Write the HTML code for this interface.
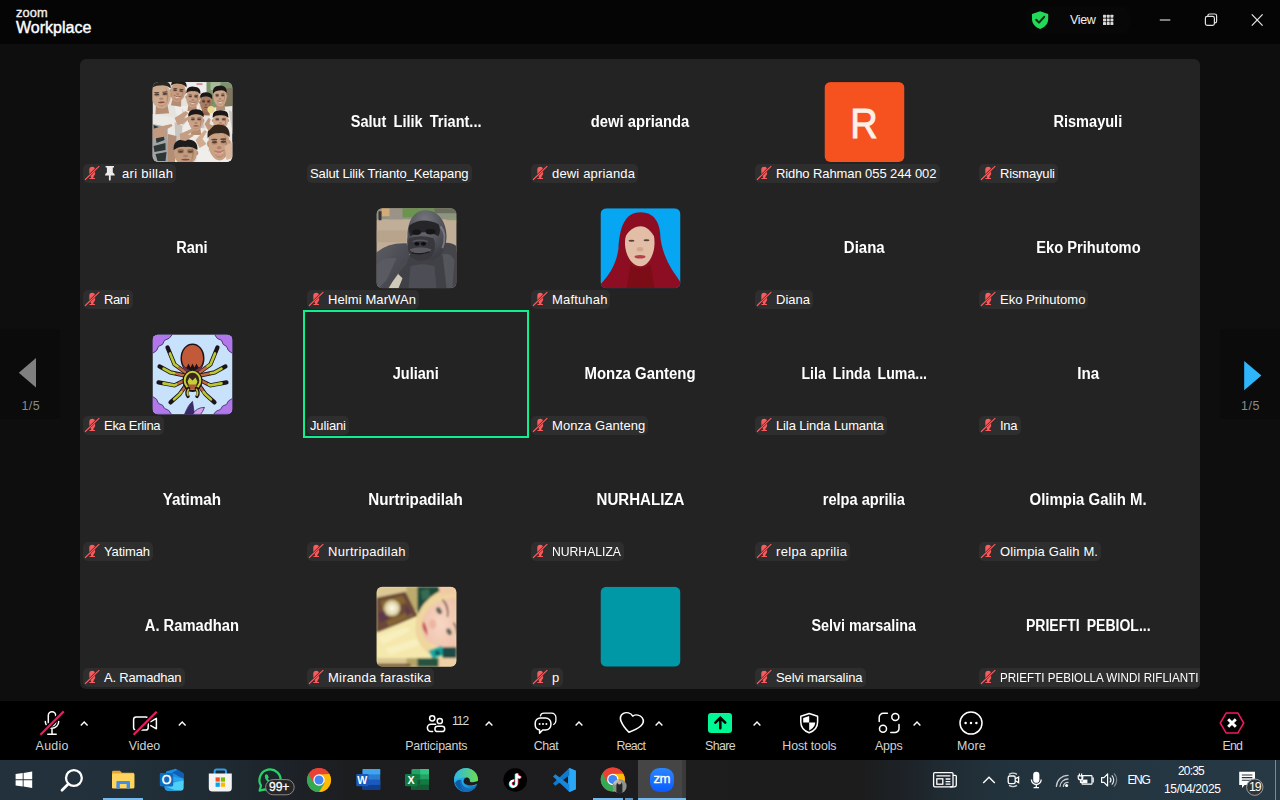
<!DOCTYPE html>
<html lang="en">
<head>
<meta charset="utf-8">
<title>Zoom Workplace</title>
<style>
html,body{margin:0;padding:0;}
body{width:1280px;height:800px;overflow:hidden;position:relative;background:#0e0e0e;font-family:"Liberation Sans",sans-serif;color:#fff;}
.a{position:absolute;}
.t{position:absolute;white-space:nowrap;line-height:1;}
#titlebar{left:0;top:0;width:1280px;height:44px;background:#050505;}
#panel{left:80px;top:59px;width:1120px;height:630px;background:#232323;border-radius:6px;overflow:hidden;}
.nm{position:absolute;white-space:nowrap;font-weight:bold;font-size:15.6px;line-height:18px;height:18px;color:#fff;text-align:center;width:224px;}
.lb{position:absolute;height:19px;background:#2e2e2e;border-radius:5px;white-space:nowrap;font-size:13px;line-height:19px;color:#fff;box-sizing:border-box;}
.lb svg{position:absolute;left:1px;top:1px;}
.lb span{position:absolute;top:0;}
.av{position:absolute;width:80px;height:80px;border-radius:6px;overflow:hidden;}
.av svg{display:block;}
#toolbar{left:0;top:701px;width:1280px;height:59px;background:#000;}
.tl{position:absolute;white-space:nowrap;font-size:12.4px;line-height:14px;color:#d2d2d2;transform:translateX(-50%);top:739px;}
#taskbar{left:0;top:760px;width:1280px;height:40px;background:linear-gradient(90deg,#22313b 0px,#21303a 120px,#1f2a32 220px,#1d2228 290px,#1c1d1f 350px,#1c1c1d 860px,#1d2227 905px,#202c34 950px,#22323c 1000px,#243540 1100px,#263944 1280px);}
</style>
</head>
<body>
<div id="titlebar" class="a"></div>
<div class="t" style="left:16px;top:7px;font-size:12.8px;color:#f2f2f2;letter-spacing:0.1px;-webkit-text-stroke:0.35px #f2f2f2;">zoom</div>
<div class="t" style="left:16px;top:20.3px;font-size:16px;color:#fff;-webkit-text-stroke:0.4px #fff;">Workplace</div>
<svg class="a" style="left:1020px;top:0" width="260" height="44" viewBox="1020 0 260 44">
  <rect x="1026" y="6" width="104" height="28" rx="10" fill="#070707"/>
  <path d="M1040.1 11.2 L1048.2 14 V19 C1048.2 24 1044.6 27.4 1040.1 28.9 C1035.6 27.4 1032 24 1032 19 V14 Z" fill="#23d959"/>
  <path d="M1036.2 19.8 L1039 22.6 L1044.2 16.8" fill="none" stroke="#0b2a14" stroke-width="2" stroke-linecap="round" stroke-linejoin="round"/>
  <g fill="#d8d8d8">
    <rect x="1103" y="14.7" width="3" height="3" rx=".6"/><rect x="1106.7" y="14.7" width="3" height="3" rx=".6"/><rect x="1110.4" y="14.7" width="3" height="3" rx=".6"/>
    <rect x="1103" y="18.4" width="3" height="3" rx=".6"/><rect x="1106.7" y="18.4" width="3" height="3" rx=".6"/><rect x="1110.4" y="18.4" width="3" height="3" rx=".6"/>
    <rect x="1103" y="22.1" width="3" height="3" rx=".6"/><rect x="1106.7" y="22.1" width="3" height="3" rx=".6"/><rect x="1110.4" y="22.1" width="3" height="3" rx=".6"/>
  </g>
  <path d="M1159.8 20 H1170.3" stroke="#d0d0d0" stroke-width="1.2" fill="none"/>
  <rect x="1205.4" y="16.4" width="9" height="9" rx="1.8" fill="none" stroke="#e0e0e0" stroke-width="1.2"/>
  <path d="M1207.9 16.2 V15.6 a1.6 1.6 0 0 1 1.6 -1.6 H1214.8 a1.8 1.8 0 0 1 1.8 1.8 V21.2 a1.6 1.6 0 0 1 -1.6 1.6 H1214.6" fill="none" stroke="#e0e0e0" stroke-width="1.2"/>
  <path d="M1251.8 14.4 L1262.6 25.6 M1262.6 14.4 L1251.8 25.6" stroke="#e8e8e8" stroke-width="1.2" fill="none"/>
</svg>
<div class="t" style="left:1070px;top:14px;font-size:12.6px;color:#f0f0f0;letter-spacing:-0.4px;">View</div>
<!-- page nav -->
<div class="a" style="left:0;top:329px;width:60px;height:90px;background:#0b0b0b;border-radius:0 2px 2px 0;"></div>
<div class="a" style="left:1220px;top:329px;width:60px;height:90px;background:#0b0b0b;border-radius:2px 0 0 2px;"></div>
<svg class="a" style="left:0;top:329px" width="60" height="90" viewBox="0 329 60 90"><path d="M36 358 V387.5 L18.8 372.7 Z" fill="#808080"/></svg>
<svg class="a" style="left:1220px;top:329px" width="60" height="90" viewBox="1220 329 60 90"><path d="M1244.2 361 V390.2 L1261.4 375.6 Z" fill="#2fb5fc"/></svg>
<div class="t" style="left:21.4px;top:399.8px;font-size:12.5px;letter-spacing:0.5px;color:#8a8a8a;">1/5</div>
<div class="t" style="left:1241px;top:399.8px;font-size:12.5px;letter-spacing:0.5px;color:#8a8a8a;">1/5</div>

<div id="panel" class="a">
<div class="av" style="left:72px;top:23px;transform:translate(0.5px,0.10px)"><svg width="80" height="80" viewBox="0 0 80 80">
<defs><filter id="bb" x="-5%" y="-5%" width="110%" height="110%"><feGaussianBlur stdDeviation="0.55"/></filter></defs>
<rect width="80" height="80" fill="#e6e3df"/>
<g filter="url(#bb)">
<rect x="30" y="0" width="28" height="14" fill="#efeeec"/>
<rect x="44" y="1" width="6" height="2" fill="#c8575a" opacity=".6"/>
<rect x="54" y="0" width="26" height="26" fill="#7b946c"/>
<rect x="58" y="0" width="10" height="8" fill="#a9bb9a"/>
<rect x="72" y="6" width="8" height="22" fill="#81765c"/>
<path d="M0 32 L24 36 L27 80 L0 80Z" fill="#ebe9e6"/>
<path d="M22 24 L46 24 L50 50 L30 54Z" fill="#efedea"/>
<path d="M56 26 L80 24 L80 52 L60 46Z" fill="#eceae6"/>
<path d="M30 50 L58 46 L60 72 L34 74Z" fill="#eeece8"/>
<path d="M44 70 L80 60 L80 80 L44 80Z" fill="#f0eeeb"/>
<path d="M22 40 L30 44 L28 70 L24 74Z" fill="#c9c4be"/>
<path d="M30 26 L34 40 L30 44Z M50 30 L52 46 L48 46Z M58 50 L62 58 L56 70Z M76 28 L80 30 L80 50Z" fill="#cdc8c2"/>
<path d="M0 42 L15 45 L16 80 L0 80Z" fill="#a2a5a5"/>
<path d="M1 43 L9 46 L8 50 L2 52Z M3 54 L11 52 L12 58 L4 61Z M1 64 L13 61 L13 68 L2 70Z M3 72 L14 70 L13 79 L5 79Z" fill="#2f3436"/>
<path d="M15.5 52 L24 54 L22.5 80 L15.5 80Z" fill="#b48d76"/>
<g transform="rotate(2 53.5 20.5)"><path d="M50.2 25.56 L56.8 25.56 L57.7 33.379999999999995 L49.3 33.379999999999995Z" fill="#956c53"/><ellipse cx="47.62" cy="20.5" rx="0.8400000000000001" ry="1.656" fill="#956c53"/><ellipse cx="59.38" cy="20.5" rx="0.8400000000000001" ry="1.656" fill="#956c53"/><ellipse cx="53.5" cy="20.5" rx="6" ry="9.2" fill="#a97c61"/><path d="M56.5 14.98 Q59.8 20.5 55.9 28.32 Q58.0 20.5 56.5 14.98Z" fill="#74503b" opacity=".55"/><path d="M50.5 26.02 Q53.5 30.619999999999997 56.5 26.02 Q53.5 28.78 50.5 26.02Z" fill="#74503b" opacity=".4"/><path d="M47.26 16.82 Q46.66 10.012 53.5 10.196000000000002 Q60.34 10.012 59.74 16.82 Q57.1 13.876000000000001 53.5 14.428 Q49.9 13.876000000000001 47.26 16.82Z" fill="#1d1918"/><ellipse cx="50.98" cy="19.58" rx="1.5" ry="0.69" fill="#33241f"/><ellipse cx="50.98" cy="18.2" rx="1.7999999999999998" ry="0.45999999999999996" fill="#43332c" opacity=".85"/><ellipse cx="50.98" cy="19.947999999999997" rx="1.92" ry="1.196" fill="#74503b" opacity=".35"/><ellipse cx="56.02" cy="19.58" rx="1.5" ry="0.69" fill="#33241f"/><ellipse cx="56.02" cy="18.2" rx="1.7999999999999998" ry="0.45999999999999996" fill="#43332c" opacity=".85"/><ellipse cx="56.02" cy="19.947999999999997" rx="1.92" ry="1.196" fill="#74503b" opacity=".35"/><ellipse cx="53.5" cy="22.708" rx="1.32" ry="0.9199999999999999" fill="#74503b" opacity=".65"/><ellipse cx="53.5" cy="25.284" rx="2.16" ry="0.644" fill="#8a4a44"/></g><g transform="rotate(8 25.5 9.5)"><path d="M21.43 15.22 L29.57 15.22 L30.68 24.06 L20.32 24.06Z" fill="#b58d72"/><ellipse cx="18.248" cy="9.5" rx="1.0360000000000003" ry="1.8719999999999999" fill="#b58d72"/><ellipse cx="32.752" cy="9.5" rx="1.0360000000000003" ry="1.8719999999999999" fill="#b58d72"/><ellipse cx="25.5" cy="9.5" rx="7.4" ry="10.4" fill="#c59c80"/><path d="M29.2 3.26 Q33.27 9.5 28.46 18.34 Q31.05 9.5 29.2 3.26Z" fill="#9a745b" opacity=".55"/><path d="M21.8 15.74 Q25.5 20.94 29.2 15.74 Q25.5 18.86 21.8 15.74Z" fill="#9a745b" opacity=".4"/><path d="M17.804 4.300000000000001 Q17.064 -2.3560000000000008 25.5 -2.1480000000000006 Q33.936 -2.3560000000000008 33.196 4.300000000000001 Q29.94 0.972 25.5 1.596 Q21.06 0.972 17.804 4.300000000000001Z" fill="#1e1a19"/><ellipse cx="22.392" cy="8.46" rx="1.85" ry="0.78" fill="#33241f"/><ellipse cx="22.392" cy="6.9" rx="2.22" ry="0.52" fill="#43332c" opacity=".85"/><ellipse cx="22.392" cy="8.876000000000001" rx="2.3680000000000003" ry="1.352" fill="#9a745b" opacity=".35"/><ellipse cx="28.608" cy="8.46" rx="1.85" ry="0.78" fill="#33241f"/><ellipse cx="28.608" cy="6.9" rx="2.22" ry="0.52" fill="#43332c" opacity=".85"/><ellipse cx="28.608" cy="8.876000000000001" rx="2.3680000000000003" ry="1.352" fill="#9a745b" opacity=".35"/><ellipse cx="25.5" cy="11.996" rx="1.6280000000000001" ry="1.04" fill="#9a745b" opacity=".65"/><path d="M22.244 14.076 Q25.5 17.82 28.756 14.076 Q25.5 15.116 22.244 14.076Z" fill="#efe9e2"/><path d="M22.022 13.972000000000001 Q25.5 15.532 28.978 13.972000000000001" stroke="#8a4a44" stroke-width=".7" fill="none"/></g><g transform="rotate(4 40.5 15.5)"><path d="M36.76 20.89 L44.24 20.89 L45.26 29.22 L35.74 29.22Z" fill="#b58d72"/><ellipse cx="33.836" cy="15.5" rx="0.9520000000000001" ry="1.764" fill="#b58d72"/><ellipse cx="47.164" cy="15.5" rx="0.9520000000000001" ry="1.764" fill="#b58d72"/><ellipse cx="40.5" cy="15.5" rx="6.8" ry="9.8" fill="#c9a185"/><path d="M43.9 9.620000000000001 Q47.64 15.5 43.22 23.83 Q45.6 15.5 43.9 9.620000000000001Z" fill="#9a745b" opacity=".55"/><path d="M37.1 21.38 Q40.5 26.28 43.9 21.38 Q40.5 24.32 37.1 21.38Z" fill="#9a745b" opacity=".4"/><path d="M33.428 11.58 Q32.748000000000005 4.327999999999999 40.5 4.523999999999999 Q48.251999999999995 4.327999999999999 47.572 11.58 Q44.58 8.444 40.5 9.032 Q36.42 8.444 33.428 11.58Z" fill="#1c1918"/><ellipse cx="37.644" cy="14.52" rx="1.7" ry="0.735" fill="#33241f"/><ellipse cx="37.644" cy="13.049999999999999" rx="2.04" ry="0.49000000000000005" fill="#43332c" opacity=".85"/><ellipse cx="37.644" cy="14.911999999999999" rx="2.176" ry="1.2740000000000002" fill="#9a745b" opacity=".35"/><ellipse cx="43.356" cy="14.52" rx="1.7" ry="0.735" fill="#33241f"/><ellipse cx="43.356" cy="13.049999999999999" rx="2.04" ry="0.49000000000000005" fill="#43332c" opacity=".85"/><ellipse cx="43.356" cy="14.911999999999999" rx="2.176" ry="1.2740000000000002" fill="#9a745b" opacity=".35"/><ellipse cx="40.5" cy="17.852" rx="1.496" ry="0.9800000000000001" fill="#9a745b" opacity=".65"/><path d="M37.508 19.812 Q40.5 23.34 43.492 19.812 Q40.5 20.792 37.508 19.812Z" fill="#efe9e2"/><path d="M37.304 19.714 Q40.5 21.184 43.696 19.714" stroke="#8a4a44" stroke-width=".7" fill="none"/></g><g transform="rotate(-3 67.5 14.5)"><path d="M63.87 19.89 L71.13 19.89 L72.12 28.22 L62.88 28.22Z" fill="#b58d72"/><ellipse cx="61.032" cy="14.5" rx="0.924" ry="1.764" fill="#b58d72"/><ellipse cx="73.968" cy="14.5" rx="0.924" ry="1.764" fill="#b58d72"/><ellipse cx="67.5" cy="14.5" rx="6.6" ry="9.8" fill="#cda68b"/><path d="M70.8 8.620000000000001 Q74.43 14.5 70.14 22.83 Q72.45 14.5 70.8 8.620000000000001Z" fill="#9a745b" opacity=".55"/><path d="M64.2 20.38 Q67.5 25.28 70.8 20.38 Q67.5 23.32 64.2 20.38Z" fill="#9a745b" opacity=".4"/><path d="M60.636 10.972 Q59.976 3.327999999999999 67.5 3.523999999999999 Q75.024 3.327999999999999 74.364 10.972 Q71.46 7.836 67.5 8.424 Q63.54 7.836 60.636 10.972Z" fill="#1a1716"/><ellipse cx="64.728" cy="13.52" rx="1.65" ry="0.735" fill="#33241f"/><ellipse cx="64.728" cy="12.049999999999999" rx="1.9799999999999998" ry="0.49000000000000005" fill="#43332c" opacity=".85"/><ellipse cx="64.728" cy="13.911999999999999" rx="2.112" ry="1.2740000000000002" fill="#9a745b" opacity=".35"/><ellipse cx="70.272" cy="13.52" rx="1.65" ry="0.735" fill="#33241f"/><ellipse cx="70.272" cy="12.049999999999999" rx="1.9799999999999998" ry="0.49000000000000005" fill="#43332c" opacity=".85"/><ellipse cx="70.272" cy="13.911999999999999" rx="2.112" ry="1.2740000000000002" fill="#9a745b" opacity=".35"/><ellipse cx="67.5" cy="16.852" rx="1.452" ry="0.9800000000000001" fill="#9a745b" opacity=".65"/><path d="M64.596 18.812 Q67.5 22.34 70.404 18.812 Q67.5 19.792 64.596 18.812Z" fill="#efe9e2"/><path d="M64.398 18.714 Q67.5 20.184 70.602 18.714" stroke="#8a4a44" stroke-width=".7" fill="none"/></g><g transform="rotate(-4 8.5 13.5)"><path d="M3.1099999999999994 20.65 L13.89 20.65 L15.36 31.7 L1.6399999999999997 31.7Z" fill="#b58d72"/><ellipse cx="-1.104000000000001" cy="13.5" rx="1.3720000000000003" ry="2.34" fill="#b58d72"/><ellipse cx="18.104" cy="13.5" rx="1.3720000000000003" ry="2.34" fill="#b58d72"/><ellipse cx="8.5" cy="13.5" rx="9.8" ry="13" fill="#cda98e"/><path d="M13.4 5.7 Q18.79 13.5 12.42 24.549999999999997 Q15.850000000000001 13.5 13.4 5.7Z" fill="#9a745b" opacity=".55"/><path d="M3.5999999999999996 21.3 Q8.5 27.8 13.4 21.3 Q8.5 25.200000000000003 3.5999999999999996 21.3Z" fill="#9a745b" opacity=".4"/><path d="M-1.692000000000002 6.74 Q-2.6720000000000006 -1.3200000000000003 8.5 -1.06 Q19.672 -1.3200000000000003 18.692 6.74 Q14.379999999999999 2.58 8.5 3.3600000000000003 Q2.62 2.58 -1.692000000000002 6.74Z" fill="#2b2523"/><ellipse cx="4.3839999999999995" cy="12.2" rx="2.45" ry="0.975" fill="#33241f"/><ellipse cx="4.3839999999999995" cy="10.25" rx="2.94" ry="0.65" fill="#43332c" opacity=".85"/><ellipse cx="4.3839999999999995" cy="12.719999999999999" rx="3.136" ry="1.69" fill="#9a745b" opacity=".35"/><ellipse cx="12.616" cy="12.2" rx="2.45" ry="0.975" fill="#33241f"/><ellipse cx="12.616" cy="10.25" rx="2.94" ry="0.65" fill="#43332c" opacity=".85"/><ellipse cx="12.616" cy="12.719999999999999" rx="3.136" ry="1.69" fill="#9a745b" opacity=".35"/><ellipse cx="8.5" cy="16.62" rx="2.156" ry="1.3" fill="#9a745b" opacity=".65"/><ellipse cx="8.5" cy="20.259999999999998" rx="3.528" ry="0.9100000000000001" fill="#8a4a44"/></g><g transform="rotate(0 43.5 38.5)"><path d="M39.43 44.11 L47.57 44.11 L48.68 52.78 L38.32 52.78Z" fill="#b58d72"/><ellipse cx="36.248" cy="38.5" rx="1.0360000000000003" ry="1.8359999999999999" fill="#b58d72"/><ellipse cx="50.752" cy="38.5" rx="1.0360000000000003" ry="1.8359999999999999" fill="#b58d72"/><ellipse cx="43.5" cy="38.5" rx="7.4" ry="10.2" fill="#caa287"/><path d="M47.2 32.38 Q51.27 38.5 46.46 47.17 Q49.05 38.5 47.2 32.38Z" fill="#9a745b" opacity=".55"/><path d="M39.8 44.62 Q43.5 49.72 47.2 44.62 Q43.5 47.68 39.8 44.62Z" fill="#9a745b" opacity=".4"/><path d="M35.804 34.827999999999996 Q35.064 26.872 43.5 27.076 Q51.936 26.872 51.196 34.827999999999996 Q47.94 31.563999999999997 43.5 32.175999999999995 Q39.06 31.563999999999997 35.804 34.827999999999996Z" fill="#1c1918"/><ellipse cx="40.392" cy="37.48" rx="1.85" ry="0.7649999999999999" fill="#33241f"/><ellipse cx="40.392" cy="35.949999999999996" rx="2.22" ry="0.51" fill="#43332c" opacity=".85"/><ellipse cx="40.392" cy="37.888" rx="2.3680000000000003" ry="1.3259999999999998" fill="#9a745b" opacity=".35"/><ellipse cx="46.608" cy="37.48" rx="1.85" ry="0.7649999999999999" fill="#33241f"/><ellipse cx="46.608" cy="35.949999999999996" rx="2.22" ry="0.51" fill="#43332c" opacity=".85"/><ellipse cx="46.608" cy="37.888" rx="2.3680000000000003" ry="1.3259999999999998" fill="#9a745b" opacity=".35"/><ellipse cx="43.5" cy="40.948" rx="1.6280000000000001" ry="1.02" fill="#9a745b" opacity=".65"/><ellipse cx="43.5" cy="43.804" rx="2.664" ry="0.714" fill="#8a4a44"/></g><g transform="rotate(0 68 38.5)"><path d="M63.82 43.56 L72.18 43.56 L73.32 51.379999999999995 L62.68 51.379999999999995Z" fill="#b58d72"/><ellipse cx="60.552" cy="38.5" rx="1.064" ry="1.656" fill="#b58d72"/><ellipse cx="75.448" cy="38.5" rx="1.064" ry="1.656" fill="#b58d72"/><ellipse cx="68" cy="38.5" rx="7.6" ry="9.2" fill="#d2aa8f"/><path d="M71.8 32.980000000000004 Q75.98 38.5 71.04 46.32 Q73.7 38.5 71.8 32.980000000000004Z" fill="#9a745b" opacity=".55"/><path d="M64.2 44.019999999999996 Q68 48.62 71.8 44.019999999999996 Q68 46.78 64.2 44.019999999999996Z" fill="#9a745b" opacity=".4"/><path d="M60.096000000000004 35.556000000000004 Q59.336 28.012 68 28.196 Q76.664 28.012 75.904 35.556000000000004 Q72.56 32.612 68 33.164 Q63.44 32.612 60.096000000000004 35.556000000000004Z" fill="#1b1817"/><ellipse cx="64.808" cy="37.58" rx="1.9" ry="0.69" fill="#33241f"/><ellipse cx="64.808" cy="36.199999999999996" rx="2.28" ry="0.45999999999999996" fill="#43332c" opacity=".85"/><ellipse cx="64.808" cy="37.948" rx="2.432" ry="1.196" fill="#9a745b" opacity=".35"/><ellipse cx="71.192" cy="37.58" rx="1.9" ry="0.69" fill="#33241f"/><ellipse cx="71.192" cy="36.199999999999996" rx="2.28" ry="0.45999999999999996" fill="#43332c" opacity=".85"/><ellipse cx="71.192" cy="37.948" rx="2.432" ry="1.196" fill="#9a745b" opacity=".35"/><ellipse cx="68" cy="40.708" rx="1.672" ry="0.9199999999999999" fill="#9a745b" opacity=".65"/><path d="M64.656 42.548 Q68 45.86 71.344 42.548 Q68 43.468 64.656 42.548Z" fill="#efe9e2"/><path d="M64.428 42.456 Q68 43.836 71.572 42.456" stroke="#8a4a44" stroke-width=".7" fill="none"/></g><g transform="rotate(0 33 71)"><ellipse cx="21.828" cy="71" rx="1.5960000000000003" ry="2.2319999999999998" fill="#b58d72"/><ellipse cx="44.172" cy="71" rx="1.5960000000000003" ry="2.2319999999999998" fill="#b58d72"/><ellipse cx="33" cy="71" rx="11.4" ry="12.4" fill="#c39b7e"/><path d="M38.7 63.56 Q44.97 71 37.56 81.53999999999999 Q41.55 71 38.7 63.56Z" fill="#9a745b" opacity=".55"/><path d="M27.3 78.44 Q33 84.64 38.7 78.44 Q33 82.16 27.3 78.44Z" fill="#9a745b" opacity=".4"/><path d="M21.144 68.024 Q20.004 56.864000000000004 33 57.112 Q45.995999999999995 56.864000000000004 44.856 68.024 Q39.84 64.05600000000001 33 64.80000000000001 Q26.16 64.05600000000001 21.144 68.024Z" fill="#1f1b1a"/><ellipse cx="28.212" cy="69.76" rx="2.85" ry="0.9299999999999999" fill="#33241f"/><ellipse cx="28.212" cy="67.9" rx="3.42" ry="0.6200000000000001" fill="#43332c" opacity=".85"/><ellipse cx="28.212" cy="70.256" rx="3.648" ry="1.612" fill="#9a745b" opacity=".35"/><ellipse cx="37.788" cy="69.76" rx="2.85" ry="0.9299999999999999" fill="#33241f"/><ellipse cx="37.788" cy="67.9" rx="3.42" ry="0.6200000000000001" fill="#43332c" opacity=".85"/><ellipse cx="37.788" cy="70.256" rx="3.648" ry="1.612" fill="#9a745b" opacity=".35"/><ellipse cx="33" cy="73.976" rx="2.508" ry="1.2400000000000002" fill="#9a745b" opacity=".65"/><ellipse cx="33" cy="77.44800000000001" rx="4.104" ry="0.8680000000000001" fill="#8a4a44"/></g><g transform="rotate(-3 66.5 61.5)"><ellipse cx="56.112" cy="61.5" rx="1.484" ry="3.024" fill="#b58d72"/><ellipse cx="76.888" cy="61.5" rx="1.484" ry="3.024" fill="#b58d72"/><ellipse cx="66.5" cy="61.5" rx="10.6" ry="16.8" fill="#cba184"/><path d="M71.8 51.42 Q77.63 61.5 70.74 75.78 Q74.45 61.5 71.8 51.42Z" fill="#9a745b" opacity=".55"/><path d="M61.2 71.58 Q66.5 79.98 71.8 71.58 Q66.5 76.62 61.2 71.58Z" fill="#9a745b" opacity=".4"/><path d="M55.476 55.452000000000005 Q54.416000000000004 42.348 66.5 42.684000000000005 Q78.584 42.348 77.524 55.452000000000005 Q72.86 50.076 66.5 51.084 Q60.14 50.076 55.476 55.452000000000005Z" fill="#30261f"/><ellipse cx="62.048" cy="59.82" rx="2.65" ry="1.26" fill="#33241f"/><ellipse cx="62.048" cy="57.3" rx="3.1799999999999997" ry="0.8400000000000001" fill="#43332c" opacity=".85"/><ellipse cx="62.048" cy="60.492" rx="3.392" ry="2.184" fill="#9a745b" opacity=".35"/><ellipse cx="70.952" cy="59.82" rx="2.65" ry="1.26" fill="#33241f"/><ellipse cx="70.952" cy="57.3" rx="3.1799999999999997" ry="0.8400000000000001" fill="#43332c" opacity=".85"/><ellipse cx="70.952" cy="60.492" rx="3.392" ry="2.184" fill="#9a745b" opacity=".35"/><ellipse cx="66.5" cy="65.532" rx="2.332" ry="1.6800000000000002" fill="#9a745b" opacity=".65"/><path d="M61.836 68.892 Q66.5 74.94 71.164 68.892 Q66.5 70.572 61.836 68.892Z" fill="#efe9e2"/><path d="M61.518 68.724 Q66.5 71.244 71.482 68.724" stroke="#8a4a44" stroke-width=".7" fill="none"/></g>
<path d="M22 36 L33 29 L36 31 L31 37 L37 34 L38 36 L30 42 L25 43Z" fill="#c69e83"/>
<path d="M0 47 L10 44 L19 42 L20 44 L13 48 L15 54 L0 57Z" fill="#c1997e"/>
<path d="M27 52 L41 46 L42 48.5 L35 53 L41 52 L41 54 L33 59 L28 58Z" fill="#c59d82"/>
<path d="M43 58 L52 48 L54.5 49.5 L50 57 L54 62 L47 66Z" fill="#d2ab91"/>
<path d="M52 42 L56 36 L58 37 L57 42 L61 44 L56 49Z" fill="#bf987e"/>
<circle cx="58.5" cy="27.5" r="3.6" fill="#ead98e"/>
<path d="M62 68.5 Q66.5 75 71.5 68 Q66.5 70.5 62 68.5Z" fill="#c9737a"/>
<path d="M72 64 L80 60 L80 76 L74 78Z" fill="#d8b69c"/>
</g>
</svg></div>
<div class="lb" style="left:3px;top:105px;width:93.0px;"><svg width="17" height="16" viewBox="0 0 17 16"><g fill="#f85c5e"><rect x="5.3" y="1.8" width="5.8" height="9.4" rx="2.9"/><path d="M6.3 10.4 H10.1 L8.9 13.5 H7.5Z"/><rect x="5.4" y="13.05" width="5.6" height="0.95" rx=".3"/></g><path d="M1.6 14 L14.6 1.7" stroke="#2e2e2e" stroke-width="2.4"/><path d="M1 14.7 L15.3 1.1" stroke="#f85c5e" stroke-width="1.2"/></svg><svg width="12" height="16" viewBox="0 0 12 16" style="left:21px;top:1px"><path d="M1.6 1 H10 V2.6 H8.8 V7.4 Q10.8 8.2 10.8 10.6 H6.7 V15 L5.8 15.8 L4.9 15 V10.6 H1 Q1 8.2 2.9 7.4 V2.6 H1.6Z" fill="#ececec"/></svg><span id="l00" style="left:39px;letter-spacing:0.287px;">ari billah</span></div>
<div class="nm" style="left:224px;top:53.7px;"><span id="n01" style="display:inline-block;transform:scaleX(0.9321);word-spacing:3.4px;">Salut Lilik Triant...</span></div>
<div class="lb" style="left:227px;top:105px;width:164.5px;"><span id="l01" style="left:3px;letter-spacing:-0.125px;">Salut Lilik Trianto_Ketapang</span></div>
<div class="nm" style="left:448px;top:53.7px;"><span id="n02" style="display:inline-block;transform:scaleX(0.9471);">dewi aprianda</span></div>
<div class="lb" style="left:451px;top:105px;width:107.0px;"><svg width="17" height="16" viewBox="0 0 17 16"><g fill="#f85c5e"><rect x="5.3" y="1.8" width="5.8" height="9.4" rx="2.9"/><path d="M6.3 10.4 H10.1 L8.9 13.5 H7.5Z"/><rect x="5.4" y="13.05" width="5.6" height="0.95" rx=".3"/></g><path d="M1.6 14 L14.6 1.7" stroke="#2e2e2e" stroke-width="2.4"/><path d="M1 14.7 L15.3 1.1" stroke="#f85c5e" stroke-width="1.2"/></svg><span id="l02" style="left:21px;letter-spacing:0.171px;">dewi aprianda</span></div>
<div class="av" style="left:744px;top:23px;transform:translate(0.5px,0.10px)"><svg width="80" height="80" viewBox="0 0 80 80"><rect width="80" height="80" fill="#f5521f"/><text transform="translate(39.4 55.6) scale(0.93 1.04)" x="0" y="0" text-anchor="middle" font-family="Liberation Sans, sans-serif" font-size="41" fill="#fdf1e8" stroke="#fdf1e8" stroke-width="0.9">R</text></svg></div>
<div class="lb" style="left:675px;top:105px;width:184.5px;"><svg width="17" height="16" viewBox="0 0 17 16"><g fill="#f85c5e"><rect x="5.3" y="1.8" width="5.8" height="9.4" rx="2.9"/><path d="M6.3 10.4 H10.1 L8.9 13.5 H7.5Z"/><rect x="5.4" y="13.05" width="5.6" height="0.95" rx=".3"/></g><path d="M1.6 14 L14.6 1.7" stroke="#2e2e2e" stroke-width="2.4"/><path d="M1 14.7 L15.3 1.1" stroke="#f85c5e" stroke-width="1.2"/></svg><span id="l03" style="left:21px;letter-spacing:-0.093px;">Ridho Rahman 055 244 002</span></div>
<div class="nm" style="left:896px;top:53.7px;"><span id="n04" style="display:inline-block;transform:scaleX(0.9324);">Rismayuli</span></div>
<div class="lb" style="left:899px;top:105px;width:79.0px;"><svg width="17" height="16" viewBox="0 0 17 16"><g fill="#f85c5e"><rect x="5.3" y="1.8" width="5.8" height="9.4" rx="2.9"/><path d="M6.3 10.4 H10.1 L8.9 13.5 H7.5Z"/><rect x="5.4" y="13.05" width="5.6" height="0.95" rx=".3"/></g><path d="M1.6 14 L14.6 1.7" stroke="#2e2e2e" stroke-width="2.4"/><path d="M1 14.7 L15.3 1.1" stroke="#f85c5e" stroke-width="1.2"/></svg><span id="l04" style="left:21px;letter-spacing:-0.169px;">Rismayuli</span></div>
<div class="nm" style="left:0px;top:179.7px;"><span id="n10" style="display:inline-block;transform:scaleX(0.9324);">Rani</span></div>
<div class="lb" style="left:3px;top:231px;width:49.5px;"><svg width="17" height="16" viewBox="0 0 17 16"><g fill="#f85c5e"><rect x="5.3" y="1.8" width="5.8" height="9.4" rx="2.9"/><path d="M6.3 10.4 H10.1 L8.9 13.5 H7.5Z"/><rect x="5.4" y="13.05" width="5.6" height="0.95" rx=".3"/></g><path d="M1.6 14 L14.6 1.7" stroke="#2e2e2e" stroke-width="2.4"/><path d="M1 14.7 L15.3 1.1" stroke="#f85c5e" stroke-width="1.2"/></svg><span id="l10" style="left:21px;letter-spacing:-0.415px;">Rani</span></div>
<div class="av" style="left:296px;top:149px;transform:translate(0.5px,0.25px)"><svg width="80" height="80" viewBox="0 0 80 80">
<defs><filter id="gb" x="-5%" y="-5%" width="110%" height="110%"><feGaussianBlur stdDeviation="0.7"/></filter>
<radialGradient id="gh" cx="45%" cy="22%" r="75%"><stop offset="0" stop-color="#77777f"/><stop offset=".55" stop-color="#55555d"/><stop offset="1" stop-color="#3c3c43"/></radialGradient>
<linearGradient id="ga" x1="0" y1="0" x2="1" y2="1"><stop offset="0" stop-color="#5c5c64"/><stop offset="1" stop-color="#3e3e45"/></linearGradient></defs>
<rect width="80" height="80" fill="#c0ad96"/>
<g filter="url(#gb)">
<rect x="0" y="0" width="80" height="11" fill="#90937f"/>
<rect x="24" y="0" width="36" height="9" fill="#6a9450"/>
<rect x="12" y="0" width="14" height="11" fill="#9b9388"/>
<rect x="5" y="0" width="8" height="8" fill="#d3aa78"/>
<rect x="2" y="3" width="3" height="10" fill="#34363a"/>
<rect x="58" y="0" width="22" height="5" fill="#6a705e"/>
<rect x="70" y="10" width="10" height="5" fill="#86a26c"/>
<path d="M0 12 H80 V44 H0Z" fill="#c1ae98"/>
<path d="M0 22 H30 V34 H0Z" fill="#b8a48c"/>
<path d="M60 36 Q74 32 80 38 L80 80 L62 80Z" fill="#44444b"/>
<path d="M24 50 Q40 42 62 46 Q72 50 70 80 L20 80Z" fill="#3f3f46"/>
<path d="M34 58 Q46 54 58 58 L60 80 L32 80Z" fill="#4e4e56"/>
<path d="M66 46 Q74 44 78 52 L76 80 L70 80Z" fill="#54545c"/>
<path d="M12 80 Q16 72 22 66 L26 70 L22 80Z" fill="#cfc9b9"/>
<path d="M0 44 Q12 34 30 35 Q36 44 30 56 Q20 66 12 80 L0 80Z" fill="url(#ga)"/>
<path d="M0 56 Q8 48 20 50 L10 72 L2 80 L0 80Z" fill="#5a5a62"/>
<path d="M49 2 C62 2 70 14 70 28 C70 40 64 50 56 52 L36 50 C31 44 30 36 31 28 C31 12 38 2 49 2Z" fill="url(#gh)"/>
<path d="M33 17 Q46 8 62 16 Q65 22 62 28 Q48 20 34 28 Q31 22 33 17Z" fill="#25252a"/>
<ellipse cx="40" cy="24" rx="4.4" ry="2.8" fill="#141417"/>
<ellipse cx="54" cy="23.5" rx="4.8" ry="2.8" fill="#141417"/>
<path d="M33 30 Q44 26 57 30 Q61 40 54 49 Q44 56 35 49 Q29 40 33 30Z" fill="#37373d"/>
<ellipse cx="40.4" cy="35.6" rx="2.6" ry="1.8" fill="#0e0e11"/><ellipse cx="47" cy="35.6" rx="2.6" ry="1.8" fill="#0e0e11"/><path d="M36 33.4 Q43.6 30.6 51.4 33.4" stroke="#55555c" stroke-width="1.4" fill="none"/>
<path d="M33 41 Q44 37 55 41 Q54 45 44 46 Q35 45 33 41Z" fill="#5a5a61"/>
<path d="M35 44.5 Q44 47 53 43.5" stroke="#17171a" stroke-width="1.2" fill="none"/>
<path d="M64 18 Q71 26 66 40" stroke="#8a8a92" stroke-width="2" fill="none" opacity=".7"/>
</g>
</svg></div>
<div class="lb" style="left:227px;top:231px;width:112.0px;"><svg width="17" height="16" viewBox="0 0 17 16"><g fill="#f85c5e"><rect x="5.3" y="1.8" width="5.8" height="9.4" rx="2.9"/><path d="M6.3 10.4 H10.1 L8.9 13.5 H7.5Z"/><rect x="5.4" y="13.05" width="5.6" height="0.95" rx=".3"/></g><path d="M1.6 14 L14.6 1.7" stroke="#2e2e2e" stroke-width="2.4"/><path d="M1 14.7 L15.3 1.1" stroke="#f85c5e" stroke-width="1.2"/></svg><span id="l11" style="left:21px;letter-spacing:0.098px;">Helmi MarWAn</span></div>
<div class="av" style="left:520px;top:149px;transform:translate(0.5px,0.25px)"><svg width="80" height="80" viewBox="0 0 80 80">
<defs><filter id="hb" x="-5%" y="-5%" width="110%" height="110%"><feGaussianBlur stdDeviation="0.5"/></filter></defs>
<rect width="80" height="80" fill="#06a6f2"/>
<g filter="url(#hb)">
<path d="M40 4 C56 4 60 18 60 30 C62 46 70 60 76 68 L80 74 L80 80 L0 80 L0 76 C8 68 16 56 18 40 C19 20 24 4 40 4Z" fill="#8d0d22"/>
<path d="M40 14 C50 14 54.5 24 54 36 C53.5 48 47 58 40 58 C32 58 25 48 24.5 36 C24 24 30 14 40 14Z" fill="#e2bea7"/>
<path d="M24 30 C26 18 33 13 40 13 C48 13 54 19 55 30 C50 22 46 18 40 18 C34 18 28 22 24 30Z" fill="#8d0d22"/>
<ellipse cx="31" cy="32.5" rx="3" ry="1.1" fill="#5a4034"/>
<ellipse cx="46" cy="32" rx="3" ry="1.1" fill="#5a4034"/>
<ellipse cx="39.5" cy="41" rx="3.3" ry="2.2" fill="#d3a58e"/>
<ellipse cx="39.5" cy="48.5" rx="5.5" ry="1.8" fill="#b5404a"/>
<path d="M30 56 Q40 64 50 56 L54 80 L26 80Z" fill="#7c0919"/>
</g>
</svg></div>
<div class="lb" style="left:451px;top:231px;width:79.4px;"><svg width="17" height="16" viewBox="0 0 17 16"><g fill="#f85c5e"><rect x="5.3" y="1.8" width="5.8" height="9.4" rx="2.9"/><path d="M6.3 10.4 H10.1 L8.9 13.5 H7.5Z"/><rect x="5.4" y="13.05" width="5.6" height="0.95" rx=".3"/></g><path d="M1.6 14 L14.6 1.7" stroke="#2e2e2e" stroke-width="2.4"/><path d="M1 14.7 L15.3 1.1" stroke="#f85c5e" stroke-width="1.2"/></svg><span id="l12" style="left:21px;letter-spacing:0.170px;">Maftuhah</span></div>
<div class="nm" style="left:672px;top:179.7px;"><span id="n13" style="display:inline-block;transform:scaleX(0.9619);">Diana</span></div>
<div class="lb" style="left:675px;top:231px;width:58.0px;"><svg width="17" height="16" viewBox="0 0 17 16"><g fill="#f85c5e"><rect x="5.3" y="1.8" width="5.8" height="9.4" rx="2.9"/><path d="M6.3 10.4 H10.1 L8.9 13.5 H7.5Z"/><rect x="5.4" y="13.05" width="5.6" height="0.95" rx=".3"/></g><path d="M1.6 14 L14.6 1.7" stroke="#2e2e2e" stroke-width="2.4"/><path d="M1 14.7 L15.3 1.1" stroke="#f85c5e" stroke-width="1.2"/></svg><span id="l13" style="left:21px;letter-spacing:0.006px;">Diana</span></div>
<div class="nm" style="left:896px;top:179.7px;"><span id="n14" style="display:inline-block;transform:scaleX(0.9414);">Eko Prihutomo</span></div>
<div class="lb" style="left:899px;top:231px;width:109.4px;"><svg width="17" height="16" viewBox="0 0 17 16"><g fill="#f85c5e"><rect x="5.3" y="1.8" width="5.8" height="9.4" rx="2.9"/><path d="M6.3 10.4 H10.1 L8.9 13.5 H7.5Z"/><rect x="5.4" y="13.05" width="5.6" height="0.95" rx=".3"/></g><path d="M1.6 14 L14.6 1.7" stroke="#2e2e2e" stroke-width="2.4"/><path d="M1 14.7 L15.3 1.1" stroke="#f85c5e" stroke-width="1.2"/></svg><span id="l14" style="left:21px;letter-spacing:0.011px;">Eko Prihutomo</span></div>
<div class="av" style="left:72px;top:275px;transform:translate(0.5px,0.40px)"><svg width="80" height="80" viewBox="0 0 80 80">
<rect width="80" height="80" fill="#c9e2fb"/>
<g fill="#b277ea" stroke="#3a2560" stroke-width=".8">
<path d="M0 0 H20 Q17 5 12 6 Q11 11 6 12 Q5 17 0 19Z"/>
<path d="M80 0 H62 Q64 5 69 6 Q70 11 74 12 Q75 17 80 19Z"/>
<path d="M0 80 V62 Q5 64 6 69 Q11 70 12 74 Q17 75 19 80Z"/>
<path d="M80 80 V64 Q75 66 74 70 Q69 71 68 75 Q63 76 61 80Z"/>
<path d="M32 80 Q36 70 40 67 Q41 74 42 80Z" fill="#3a2a6a"/>
<path d="M40 80 Q44 73 52 73 Q50 78 48 80Z" fill="#d9a0ee"/>
</g>
<g stroke-linecap="round" fill="none">
<g stroke="#1c1418" stroke-width="4.2">
<path d="M33 38 L22 30 L15 13"/><path d="M47 38 L58 30 L65 13"/>
<path d="M32 41 L18 38 L7 32"/><path d="M48 41 L62 38 L73 32"/>
<path d="M32 46 L22 51 L6 48"/><path d="M48 46 L58 51 L74 48"/>
<path d="M34 50 L27 60 L18 68"/><path d="M46 50 L53 60 L62 68"/>
</g>
<g stroke="#c0683e" stroke-width="2.6">
<path d="M33 38 L26 33"/><path d="M47 38 L54 33"/>
<path d="M32 41 L24 39.3"/><path d="M48 41 L56 39.3"/>
<path d="M32 46 L26 49"/><path d="M48 46 L54 49"/>
<path d="M34 50 L30 56"/><path d="M46 50 L50 56"/>
</g>
<g stroke="#bcc832" stroke-width="2.6">
<path d="M25 32 L22 30 L17.5 19"/><path d="M55 32 L58 30 L62.5 19"/>
<path d="M22 38.8 L18 38 L11 34.2"/><path d="M58 38.8 L62 38 L69 34.2"/>
<path d="M24 50 L22 51 L11 49"/><path d="M56 50 L58 51 L69 49"/>
<path d="M29 57.5 L27 60 L21.5 65"/><path d="M51 57.5 L53 60 L58.5 65"/>
</g>
</g>
<ellipse cx="40" cy="24" rx="12" ry="15" fill="#1c1418"/>
<path d="M40 10.5 C47 10.5 50.5 17 50.5 24 C50.5 29 48 33 46 33 L44 29 L42 33 L40 29 L38 33 L36 29 L34 33 C32 33 29.5 29 29.5 24 C29.5 17 33 10.5 40 10.5Z" fill="#c25a3a"/>
<path d="M30 30 Q40 42 50 30 L48 36 Q40 42 32 36Z" fill="#6a3048"/>
<ellipse cx="40" cy="46.5" rx="10" ry="11" fill="#1c1418"/>
<ellipse cx="40" cy="46" rx="7.8" ry="8.6" fill="#3a2420" stroke="#c3d038" stroke-width="2"/>
<path d="M35 47 L37 43 L40 46 L43 43 L45 47 L43 52 L37 52Z" fill="#c3d038"/>
<path d="M36 50 H44 L43 55 H37Z" fill="#b0583a"/>
<path d="M36 54 Q33 58 35.5 62 M44 54 Q47 58 44.5 62" stroke="#1c1418" stroke-width="3.4" fill="none" stroke-linecap="round"/>
<path d="M36 55 Q34 58 35.5 61 M44 55 Q46 58 44.5 61" stroke="#bcc832" stroke-width="1.6" fill="none" stroke-linecap="round"/>
</svg></div>
<div class="lb" style="left:3px;top:357px;width:80.6px;"><svg width="17" height="16" viewBox="0 0 17 16"><g fill="#f85c5e"><rect x="5.3" y="1.8" width="5.8" height="9.4" rx="2.9"/><path d="M6.3 10.4 H10.1 L8.9 13.5 H7.5Z"/><rect x="5.4" y="13.05" width="5.6" height="0.95" rx=".3"/></g><path d="M1.6 14 L14.6 1.7" stroke="#2e2e2e" stroke-width="2.4"/><path d="M1 14.7 L15.3 1.1" stroke="#f85c5e" stroke-width="1.2"/></svg><span id="l20" style="left:21px;letter-spacing:-0.295px;">Eka Erlina</span></div>
<div class="nm" style="left:224px;top:305.7px;"><span id="n21" style="display:inline-block;transform:scaleX(0.9306);">Juliani</span></div>
<div class="lb" style="left:227px;top:357px;width:42.0px;"><span id="l21" style="left:3px;letter-spacing:-0.143px;">Juliani</span></div>
<div class="nm" style="left:448px;top:305.7px;"><span id="n22" style="display:inline-block;transform:scaleX(0.9569);">Monza Ganteng</span></div>
<div class="lb" style="left:451px;top:357px;width:117.3px;"><svg width="17" height="16" viewBox="0 0 17 16"><g fill="#f85c5e"><rect x="5.3" y="1.8" width="5.8" height="9.4" rx="2.9"/><path d="M6.3 10.4 H10.1 L8.9 13.5 H7.5Z"/><rect x="5.4" y="13.05" width="5.6" height="0.95" rx=".3"/></g><path d="M1.6 14 L14.6 1.7" stroke="#2e2e2e" stroke-width="2.4"/><path d="M1 14.7 L15.3 1.1" stroke="#f85c5e" stroke-width="1.2"/></svg><span id="l22" style="left:21px;letter-spacing:0.065px;">Monza Ganteng</span></div>
<div class="nm" style="left:672px;top:305.7px;"><span id="n23" style="display:inline-block;transform:scaleX(0.9065);word-spacing:3.4px;">Lila Linda Luma...</span></div>
<div class="lb" style="left:675px;top:357px;width:131.8px;"><svg width="17" height="16" viewBox="0 0 17 16"><g fill="#f85c5e"><rect x="5.3" y="1.8" width="5.8" height="9.4" rx="2.9"/><path d="M6.3 10.4 H10.1 L8.9 13.5 H7.5Z"/><rect x="5.4" y="13.05" width="5.6" height="0.95" rx=".3"/></g><path d="M1.6 14 L14.6 1.7" stroke="#2e2e2e" stroke-width="2.4"/><path d="M1 14.7 L15.3 1.1" stroke="#f85c5e" stroke-width="1.2"/></svg><span id="l23" style="left:21px;letter-spacing:-0.122px;">Lila Linda Lumanta</span></div>
<div class="nm" style="left:896px;top:305.7px;"><span id="n24" style="display:inline-block;transform:scaleX(0.9739);">Ina</span></div>
<div class="lb" style="left:899px;top:357px;width:41.6px;"><svg width="17" height="16" viewBox="0 0 17 16"><g fill="#f85c5e"><rect x="5.3" y="1.8" width="5.8" height="9.4" rx="2.9"/><path d="M6.3 10.4 H10.1 L8.9 13.5 H7.5Z"/><rect x="5.4" y="13.05" width="5.6" height="0.95" rx=".3"/></g><path d="M1.6 14 L14.6 1.7" stroke="#2e2e2e" stroke-width="2.4"/><path d="M1 14.7 L15.3 1.1" stroke="#f85c5e" stroke-width="1.2"/></svg><span id="l24" style="left:21px;letter-spacing:-0.243px;">Ina</span></div>
<div class="nm" style="left:0px;top:431.7px;"><span id="n30" style="display:inline-block;transform:scaleX(0.9750);">Yatimah</span></div>
<div class="lb" style="left:3px;top:483px;width:70.0px;"><svg width="17" height="16" viewBox="0 0 17 16"><g fill="#f85c5e"><rect x="5.3" y="1.8" width="5.8" height="9.4" rx="2.9"/><path d="M6.3 10.4 H10.1 L8.9 13.5 H7.5Z"/><rect x="5.4" y="13.05" width="5.6" height="0.95" rx=".3"/></g><path d="M1.6 14 L14.6 1.7" stroke="#2e2e2e" stroke-width="2.4"/><path d="M1 14.7 L15.3 1.1" stroke="#f85c5e" stroke-width="1.2"/></svg><span id="l30" style="left:21px;letter-spacing:-0.123px;">Yatimah</span></div>
<div class="nm" style="left:224px;top:431.7px;"><span id="n31" style="display:inline-block;transform:scaleX(0.9742);">Nurtripadilah</span></div>
<div class="lb" style="left:227px;top:483px;width:101.5px;"><svg width="17" height="16" viewBox="0 0 17 16"><g fill="#f85c5e"><rect x="5.3" y="1.8" width="5.8" height="9.4" rx="2.9"/><path d="M6.3 10.4 H10.1 L8.9 13.5 H7.5Z"/><rect x="5.4" y="13.05" width="5.6" height="0.95" rx=".3"/></g><path d="M1.6 14 L14.6 1.7" stroke="#2e2e2e" stroke-width="2.4"/><path d="M1 14.7 L15.3 1.1" stroke="#f85c5e" stroke-width="1.2"/></svg><span id="l31" style="left:21px;letter-spacing:0.316px;">Nurtripadilah</span></div>
<div class="nm" style="left:448px;top:431.7px;"><span id="n32" style="display:inline-block;transform:scaleX(0.9670);">NURHALIZA</span></div>
<div class="lb" style="left:451px;top:483px;width:93.0px;"><svg width="17" height="16" viewBox="0 0 17 16"><g fill="#f85c5e"><rect x="5.3" y="1.8" width="5.8" height="9.4" rx="2.9"/><path d="M6.3 10.4 H10.1 L8.9 13.5 H7.5Z"/><rect x="5.4" y="13.05" width="5.6" height="0.95" rx=".3"/></g><path d="M1.6 14 L14.6 1.7" stroke="#2e2e2e" stroke-width="2.4"/><path d="M1 14.7 L15.3 1.1" stroke="#f85c5e" stroke-width="1.2"/></svg><span id="l32" style="left:21px;transform-origin:0 50%;transform:scaleX(0.9362);">NURHALIZA</span></div>
<div class="nm" style="left:672px;top:431.7px;"><span id="n33" style="display:inline-block;transform:scaleX(0.9375);">relpa aprilia</span></div>
<div class="lb" style="left:675px;top:483px;width:95.0px;"><svg width="17" height="16" viewBox="0 0 17 16"><g fill="#f85c5e"><rect x="5.3" y="1.8" width="5.8" height="9.4" rx="2.9"/><path d="M6.3 10.4 H10.1 L8.9 13.5 H7.5Z"/><rect x="5.4" y="13.05" width="5.6" height="0.95" rx=".3"/></g><path d="M1.6 14 L14.6 1.7" stroke="#2e2e2e" stroke-width="2.4"/><path d="M1 14.7 L15.3 1.1" stroke="#f85c5e" stroke-width="1.2"/></svg><span id="l33" style="left:21px;letter-spacing:0.316px;">relpa aprilia</span></div>
<div class="nm" style="left:896px;top:431.7px;"><span id="n34" style="display:inline-block;transform:scaleX(0.9590);">Olimpia Galih M.</span></div>
<div class="lb" style="left:899px;top:483px;width:122.0px;"><svg width="17" height="16" viewBox="0 0 17 16"><g fill="#f85c5e"><rect x="5.3" y="1.8" width="5.8" height="9.4" rx="2.9"/><path d="M6.3 10.4 H10.1 L8.9 13.5 H7.5Z"/><rect x="5.4" y="13.05" width="5.6" height="0.95" rx=".3"/></g><path d="M1.6 14 L14.6 1.7" stroke="#2e2e2e" stroke-width="2.4"/><path d="M1 14.7 L15.3 1.1" stroke="#f85c5e" stroke-width="1.2"/></svg><span id="l34" style="left:21px;letter-spacing:0.127px;">Olimpia Galih M.</span></div>
<div class="nm" style="left:0px;top:557.7px;"><span id="n40" style="display:inline-block;transform:scaleX(0.9450);">A. Ramadhan</span></div>
<div class="lb" style="left:3px;top:609px;width:101.5px;"><svg width="17" height="16" viewBox="0 0 17 16"><g fill="#f85c5e"><rect x="5.3" y="1.8" width="5.8" height="9.4" rx="2.9"/><path d="M6.3 10.4 H10.1 L8.9 13.5 H7.5Z"/><rect x="5.4" y="13.05" width="5.6" height="0.95" rx=".3"/></g><path d="M1.6 14 L14.6 1.7" stroke="#2e2e2e" stroke-width="2.4"/><path d="M1 14.7 L15.3 1.1" stroke="#f85c5e" stroke-width="1.2"/></svg><span id="l40" style="left:21px;letter-spacing:-0.200px;">A. Ramadhan</span></div>
<div class="av" style="left:296px;top:527px;transform:translate(0.5px,0.70px)"><svg width="80" height="80" viewBox="0 0 80 80">
<defs><filter id="sb" x="-5%" y="-5%" width="110%" height="110%"><feGaussianBlur stdDeviation="0.8"/></filter>
<radialGradient id="sf" cx="55%" cy="50%" r="60%"><stop offset="0" stop-color="#f7d6c4"/><stop offset="1" stop-color="#efc2aa"/></radialGradient></defs>
<rect width="80" height="80" fill="#f3e5a6"/>
<g filter="url(#sb)">
<rect x="0" y="0" width="44" height="14" fill="#dcc895"/>
<rect x="30" y="0" width="13" height="24" fill="#bcab6c"/>
<rect x="41" y="0" width="23" height="27" fill="#1e4a3b"/>
<path d="M44 4 L52 2 L54 10 L46 14Z M52 14 L60 12 L60 22 L52 22Z" fill="#3f7a5c" opacity=".7"/>
<path d="M0 11 L29 5 L41 29 L3 46 L0 46Z" fill="#6a4838"/>
<path d="M4 14 L26 9 L30 16 L6 24Z M10 34 L34 24 L37 29 L12 40Z" fill="#8a6a30" opacity=".85"/>
<path d="M2 26 L10 24 L12 32 L3 36Z M28 18 L36 26 L30 30Z" fill="#5a3550" opacity=".8"/>
<circle cx="15.5" cy="21.5" r="8.4" fill="#cbbd8c"/>
<circle cx="15.5" cy="21.5" r="6" fill="#ece4c2"/>
<circle cx="15.5" cy="21.5" r="2.4" fill="#fbf7e4"/>
<path d="M0 46 L38 31 L46 38 L52 60 L80 66 L80 72 L0 72Z" fill="#f5e8ac"/>
<path d="M2 50 L30 40 L34 44 L6 58Z M8 62 L40 52 L44 58 L14 68Z" fill="#f9f0c4" opacity=".8"/>
<path d="M39 40 C40 20 54 5 80 -2 L80 12 C60 13 49 24 48 40 C47 54 56 62 68 65 L52 67 C44 60 38 50 39 40Z" fill="#efd59e"/>
<path d="M62 0 H80 V8 Q70 6 64 9Z" fill="#f2c9a6"/>
<path d="M45.5 40 C45.5 24 58 12.5 80 10.5 L80 64 C62 64 45.5 56 45.5 40Z" fill="url(#sf)"/>
<ellipse cx="56" cy="37.5" rx="3.6" ry="5" fill="#ecb6a2"/>
<ellipse cx="62.5" cy="24" rx="3.8" ry="2.5" fill="#5f6458" transform="rotate(58 62.5 24)"/>
<ellipse cx="72.5" cy="45" rx="3.6" ry="2.4" fill="#5f6458" transform="rotate(62 72.5 45)"/>
<path d="M66 13 Q72.5 19 71 30" stroke="#4e372d" stroke-width="1.4" fill="none"/>
<path d="M77 36 Q80.5 40 80.5 47" stroke="#4e372d" stroke-width="1.4" fill="none"/>
<path d="M46.8 34.6 Q44.8 39.4 47.2 43.6 Q50 47 50.4 49.6 Q51.6 44 49.8 40.4 Q48.8 36.8 46.8 34.6Z" fill="#c9525c"/>
<path d="M52 64 L65 59 L69 68 L56 72Z" fill="#12a9a0"/>
<rect x="58.5" y="64" width="5" height="4.4" fill="#0b5f5c"/>
<rect x="66" y="60.5" width="14" height="11.5" fill="#1d4b47"/>
<rect x="0" y="71.5" width="80" height="8.5" fill="#dac893"/>
<rect x="30" y="71.5" width="12" height="8.5" fill="#b4a468"/>
<rect x="41" y="71.5" width="22" height="8.5" fill="#27533f"/>
<rect x="62" y="71.5" width="18" height="8.5" fill="#eed0a6"/>
<rect x="0" y="77" width="34" height="3" fill="#735238"/>
</g>
</svg></div>
<div class="lb" style="left:227px;top:609px;width:127.0px;"><svg width="17" height="16" viewBox="0 0 17 16"><g fill="#f85c5e"><rect x="5.3" y="1.8" width="5.8" height="9.4" rx="2.9"/><path d="M6.3 10.4 H10.1 L8.9 13.5 H7.5Z"/><rect x="5.4" y="13.05" width="5.6" height="0.95" rx=".3"/></g><path d="M1.6 14 L14.6 1.7" stroke="#2e2e2e" stroke-width="2.4"/><path d="M1 14.7 L15.3 1.1" stroke="#f85c5e" stroke-width="1.2"/></svg><span id="l41" style="left:21px;letter-spacing:0.205px;">Miranda farastika</span></div>
<div class="av" style="left:520px;top:527px;transform:translate(0.5px,0.70px)"><svg width="80" height="80" viewBox="0 0 80 80"><rect width="80" height="80" fill="#0097a7"/></svg></div>
<div class="lb" style="left:451px;top:609px;width:32.0px;"><svg width="17" height="16" viewBox="0 0 17 16"><g fill="#f85c5e"><rect x="5.3" y="1.8" width="5.8" height="9.4" rx="2.9"/><path d="M6.3 10.4 H10.1 L8.9 13.5 H7.5Z"/><rect x="5.4" y="13.05" width="5.6" height="0.95" rx=".3"/></g><path d="M1.6 14 L14.6 1.7" stroke="#2e2e2e" stroke-width="2.4"/><path d="M1 14.7 L15.3 1.1" stroke="#f85c5e" stroke-width="1.2"/></svg><span id="l42" style="left:21px;letter-spacing:0.000px;">p</span></div>
<div class="nm" style="left:672px;top:557.7px;"><span id="n43" style="display:inline-block;transform:scaleX(0.9211);">Selvi marsalina</span></div>
<div class="lb" style="left:675px;top:609px;width:110.5px;"><svg width="17" height="16" viewBox="0 0 17 16"><g fill="#f85c5e"><rect x="5.3" y="1.8" width="5.8" height="9.4" rx="2.9"/><path d="M6.3 10.4 H10.1 L8.9 13.5 H7.5Z"/><rect x="5.4" y="13.05" width="5.6" height="0.95" rx=".3"/></g><path d="M1.6 14 L14.6 1.7" stroke="#2e2e2e" stroke-width="2.4"/><path d="M1 14.7 L15.3 1.1" stroke="#f85c5e" stroke-width="1.2"/></svg><span id="l43" style="left:21px;letter-spacing:-0.117px;">Selvi marsalina</span></div>
<div class="nm" style="left:896px;top:557.7px;"><span id="n44" style="display:inline-block;transform:scaleX(0.8993);word-spacing:3.4px;">PRIEFTI PEBIOL...</span></div>
<div class="lb" style="left:899px;top:609px;width:221.0px;border-radius:5px 0 0 5px;"><svg width="17" height="16" viewBox="0 0 17 16"><g fill="#f85c5e"><rect x="5.3" y="1.8" width="5.8" height="9.4" rx="2.9"/><path d="M6.3 10.4 H10.1 L8.9 13.5 H7.5Z"/><rect x="5.4" y="13.05" width="5.6" height="0.95" rx=".3"/></g><path d="M1.6 14 L14.6 1.7" stroke="#2e2e2e" stroke-width="2.4"/><path d="M1 14.7 L15.3 1.1" stroke="#f85c5e" stroke-width="1.2"/></svg><span id="l44" style="left:21px;transform-origin:0 50%;transform:scaleX(0.8921);">PRIEFTI PEBIOLLA WINDI RIFLIANTI</span></div>
<div class="a" style="left:223px;top:251px;width:222px;height:124px;border:2px solid #0cf08e;"></div>
</div>
<div id="toolbar" class="a"></div>
<svg class="a" style="left:0;top:701px" width="1280" height="59" viewBox="0 701 1280 59" fill="none" stroke="#fff" stroke-width="1.5" stroke-linecap="round" stroke-linejoin="round">
  <!-- audio -->
  <rect x="48.3" y="711.8" width="7.4" height="14" rx="3.7"/>
  <path d="M45.3 721.5 a6.7 6.7 0 0 0 13.4 0 M52 728.4 V734 M47.8 734.3 H56.2"/>
  <path d="M40.6 734.6 L63.6 711.6" stroke="#000" stroke-width="5" stroke-linecap="butt"/>
  <path d="M40.4 734.8 L63.8 711.4" stroke="#f2195f" stroke-width="2.2" stroke-linecap="butt"/>
  <!-- video -->
  <rect x="133.6" y="717" width="14.6" height="13" rx="2.6"/>
  <path d="M150.8 721.6 L156.4 718.4 V728.8 L150.8 725.6"/>
  <path d="M133.8 734.6 L156.4 712" stroke="#000" stroke-width="5" stroke-linecap="butt"/>
  <path d="M133.6 734.8 L156.6 711.8" stroke="#f2195f" stroke-width="2.2" stroke-linecap="butt"/>
  <!-- carets -->
  <g stroke-width="1.4" stroke-linecap="butt" stroke-linejoin="miter">
    <path d="M80.8 725.4 L84.2 722 L87.6 725.4"/>
    <path d="M178.8 725.4 L182.2 722 L185.6 725.4"/>
    <path d="M485.6 725.4 L489 722 L492.4 725.4"/>
    <path d="M575.6 725.4 L579 722 L582.4 725.4"/>
    <path d="M655.6 725.4 L659 722 L662.4 725.4"/>
    <path d="M753.6 725.4 L757 722 L760.4 725.4"/>
    <path d="M913.6 725.4 L917 722 L920.4 725.4"/>
  </g>
  <!-- participants -->
  <circle cx="432.2" cy="718.3" r="2.6"/>
  <circle cx="439.8" cy="721" r="2.6"/>
  <rect x="434.9" y="726.2" width="9.8" height="5.4" rx="2.7"/>
  <path d="M435.6 724.2 H431 a3.65 3.65 0 0 0 0 7.3 H432.6"/>
  <!-- chat -->
  <path d="M540.2 717.9 H545.6 a5.3 5.3 0 0 1 5.3 5.3 V724.8 a5.3 5.3 0 0 1 -5.3 5.3 H542.6 L539.6 733.2 V730.1 a5.3 5.3 0 0 1 -4.4 -5.3 V723.2 a5.3 5.3 0 0 1 5 -5.3Z"/>
  <path d="M540.4 715.8 a3.6 3.6 0 0 1 3.5 -2.7 H551.6 a4.3 4.3 0 0 1 4.3 4.3 V720.8 a4.2 4.2 0 0 1 -2.2 3.7" stroke-width="1.3"/>
  <g fill="#fff" stroke="none"><circle cx="539.6" cy="724.1" r="1"/><circle cx="543" cy="724.1" r="1"/><circle cx="546.4" cy="724.1" r="1"/></g>
  <!-- react heart -->
  <g transform="translate(631 723.4) rotate(13) scale(1.24 1.02) translate(-12 -12.3)">
    <path d="M12 21.2 C12 21.2 2.6 14.4 2.6 8.4 C2.6 5.2 5.1 2.8 8.1 2.8 C9.9 2.8 11.3 3.7 12 5 C12.7 3.7 14.1 2.8 15.9 2.8 C18.9 2.8 21.4 5.2 21.4 8.4 C21.4 14.4 12 21.2 12 21.2 Z" stroke-width="1.35"/>
  </g>
  <!-- share -->
  <rect x="708" y="713" width="24" height="20" rx="3" fill="#00f793" stroke="none"/>
  <path d="M720.3 728.2 V718.8 M715.4 722.6 L720.3 717.9 L725.2 722.6" stroke="#000" stroke-width="2.6" stroke-linecap="round" stroke-linejoin="miter"/>
  <!-- host tools -->
  <path d="M809.2 713.5 L817.6 716.3 V722 C817.6 727.6 813.6 731.2 809.2 732.8 C804.8 731.2 800.8 727.6 800.8 722 V716.3 Z"/>
  <g fill="#fff" stroke="none">
    <path d="M809.2 716 L803.2 718 V722.6 H809.2Z"/>
    <path d="M809.2 722.6 H815.2 C815 726.4 812.4 729 809.2 730.4Z"/>
  </g>
  <!-- apps -->
  <path d="M879.2 721.4 V717.4 a4.2 4.2 0 0 1 4.2 -4.2 H887.4"/>
  <circle cx="895.3" cy="717.1" r="3.5"/>
  <circle cx="883" cy="728.8" r="3.5"/>
  <path d="M899 724.6 V728.4 a4.2 4.2 0 0 1 -4.2 4.2 H890.8"/>
  <!-- more -->
  <circle cx="971" cy="723.1" r="11"/>
  <g fill="#fff" stroke="none"><circle cx="965.6" cy="723.1" r="1.25"/><circle cx="971" cy="723.1" r="1.25"/><circle cx="976.4" cy="723.1" r="1.25"/></g>
  <!-- end -->
  <path d="M1220.3 723 L1226.2 712.9 H1237.8 L1243.7 723 L1237.8 733.1 H1226.2 Z" stroke="#f2195f" stroke-width="1.5"/>
  <path d="M1228.2 719.2 L1235.8 726.8 M1235.8 719.2 L1228.2 726.8" stroke-width="2.9" stroke-linecap="butt"/>
</svg>
<div class="t" style="left:452px;top:714.5px;font-size:12px;color:#d8d8d8;letter-spacing:-1px;">112</div>
<div class="tl" style="left:52.1px;"><span id="t0" style="letter-spacing:0.252px">Audio</span></div>
<div class="tl" style="left:144.5px;"><span id="t1" style="letter-spacing:-0.042px">Video</span></div>
<div class="tl" style="left:436.3px;"><span id="t2" style="letter-spacing:-0.222px">Participants</span></div>
<div class="tl" style="left:546px;"><span id="t3" style="letter-spacing:-0.394px">Chat</span></div>
<div class="tl" style="left:630.8px;"><span id="t4" style="letter-spacing:-0.719px">React</span></div>
<div class="tl" style="left:720.1px;"><span id="t5" style="letter-spacing:-0.592px">Share</span></div>
<div class="tl" style="left:809.4px;"><span id="t6" style="letter-spacing:-0.094px">Host tools</span></div>
<div class="tl" style="left:888.8px;"><span id="t7" style="letter-spacing:-0.150px">Apps</span></div>
<div class="tl" style="left:971.4px;"><span id="t8" style="letter-spacing:0.172px">More</span></div>
<div class="tl" style="left:1232.3px;"><span id="t9" style="letter-spacing:-0.878px">End</span></div>

<div id="taskbar" class="a"></div>
<div class="a" style="left:638px;top:760px;width:44px;height:40px;background:#454545;"></div>
<div class="a" style="left:682px;top:760px;width:4px;height:40px;background:#3a3a3a;"></div>
<div class="a" style="left:103px;top:798px;width:40px;height:2px;background:#76b9ed;"></div>
<div class="a" style="left:593px;top:798px;width:30px;height:2px;background:#76b9ed;"></div>
<div class="a" style="left:625px;top:798px;width:8px;height:2px;background:#5f98c4;"></div>
<div class="a" style="left:638px;top:798px;width:48px;height:2px;background:#76b9ed;"></div>
<div class="a" style="left:1275px;top:760px;width:1px;height:40px;background:#7d8890;"></div>
<svg class="a" style="left:0;top:760px" width="1280" height="40" viewBox="0 760 1280 40">
  <!-- start -->
  <g fill="#fff"><path d="M15.6 774 L22.7 773 V779.3 H15.6Z M23.6 772.9 L32.2 771.6 V779.3 H23.6Z M15.6 780.2 H22.7 V786.5 L15.6 785.5Z M23.6 780.2 H32.2 V787.9 L23.6 786.6Z"/></g>
  <!-- search -->
  <circle cx="73.9" cy="778" r="7.9" fill="none" stroke="#fff" stroke-width="2.3"/>
  <path d="M68.2 784 L62 790.2" stroke="#fff" stroke-width="2.7" stroke-linecap="round"/>
  <!-- explorer -->
  <path d="M112 772.2 a1.4 1.4 0 0 1 1.4 -1.4 H120 L122 772.8 H133 a1.3 1.3 0 0 1 1.3 1.3 V787 H112Z" fill="#e9a62a"/>
  <rect x="112" y="773.6" width="22.3" height="14.8" rx="1.2" fill="#ffd55f"/>
  <path d="M116.4 788.4 V782 a1 1 0 0 1 1 -1 H129 a1 1 0 0 1 1 1 V788.4 H126.6 V784 H119.8 V788.4Z" fill="#3f8fe6"/>
  <!-- outlook -->
  <path d="M166 771.4 L175.6 768.8 L183.5 773.6 V788 a2.4 2.4 0 0 1 -2.4 2.4 H168 a2 2 0 0 1 -2 -2Z" fill="#1b8fe2"/>
  <path d="M172 772.4 L178 769.8 L183.5 773.6 V779 Z" fill="#0f5fb8"/>
  <path d="M172.6 776.4 L183.5 778.6 V784 L172.6 781Z" fill="#2aa4ec"/>
  <path d="M164 784.6 L183.5 780.4 V788.2 a2.4 2.4 0 0 1 -2.4 2.4 H168 a3 3 0 0 1 -3 -2.4Z" fill="#4dd0f6"/>
  <path d="M164 786 L176 790.6 H168 a3 3 0 0 1 -3.4 -2.6Z" fill="#1f9ae6"/>
  <rect x="159.8" y="773" width="13.4" height="13.4" rx="1.4" fill="#0f6cbd"/>
  <!-- store -->
  <path d="M214.6 774 V771.6 a2 2 0 0 1 2 -2 H224 a2 2 0 0 1 2 2 V774" fill="none" stroke="#2f9de8" stroke-width="2"/>
  <path d="M208.8 773.6 H231.8 V788 a3.6 3.6 0 0 1 -3.6 3.6 H212.4 a3.6 3.6 0 0 1 -3.6 -3.6Z" fill="#f4f4f4"/>
  <rect x="215.6" y="777.4" width="4.2" height="4.2" fill="#f25022"/><rect x="220.8" y="777.4" width="4.2" height="4.2" fill="#7fba00"/>
  <rect x="215.6" y="782.6" width="4.2" height="4.2" fill="#00a4ef"/><rect x="220.8" y="782.6" width="4.2" height="4.2" fill="#ffb900"/>
  <!-- whatsapp -->
  <path d="M259.6 790.6 L261 785.6 A10.6 10.6 0 1 1 265 789.4 Z" fill="none" stroke="#25d366" stroke-width="2.2" stroke-linejoin="round"/>
  <path d="M265.6 774.4 C264.4 775.6 264.6 778 266.8 780.8 C269 783.6 271.6 785 273.4 784.6 C274.6 784.2 275.2 783 274.8 782.4 L272.6 781.2 L271.4 782.2 C270 781.6 268.4 780 267.8 778.6 L268.8 777.4 L267.6 774.8 C267 774 266.2 774 265.6 774.4Z" fill="#25d366"/>
  <rect x="265.6" y="779.6" width="28.6" height="15.2" rx="7.6" fill="#262626" stroke="#8a8a8a" stroke-width="1"/>
  <!-- chrome -->
  <g>
    <circle cx="319" cy="780" r="12" fill="#e94235"/>
    <path d="M319 780 L308.6 786 A12 12 0 0 0 319 792 L325.2 783.6Z" fill="#34a853"/>
    <path d="M308.6 774 A12 12 0 0 0 319 792 L324.4 783 L313.8 783 Z" fill="#34a853"/>
    <path d="M319 792 A12 12 0 0 0 329.4 774 L319 774 L324.6 783Z" fill="#fbbc05"/>
    <path d="M308.6 774 A12 12 0 0 1 329.4 774 L319 774.4Z" fill="#e94235"/>
    <circle cx="319" cy="780" r="5.7" fill="#fff"/>
    <circle cx="319" cy="780" r="4.5" fill="#4285f4"/>
  </g>
  <!-- word -->
  <rect x="362.6" y="769" width="17.6" height="21" rx="1.4" fill="#2b7cd3"/>
  <rect x="362.6" y="769" width="17.6" height="5.4" fill="#41a5ee"/><rect x="362.6" y="779.6" width="17.6" height="5.2" fill="#185abd"/><rect x="362.6" y="784.8" width="17.6" height="5.2" fill="#103f91"/>
  <rect x="356.2" y="773.9" width="12.4" height="12.4" rx="1.2" fill="#185abd"/>
  <!-- excel -->
  <rect x="411.4" y="769" width="17.6" height="21" rx="1.4" fill="#21a366"/>
  <rect x="420.2" y="769" width="8.8" height="5.4" fill="#33c481"/><rect x="411.4" y="774.4" width="8.8" height="5.2" fill="#107c41"/><rect x="411.4" y="779.6" width="17.6" height="5.2" fill="#185c37"/><rect x="420.2" y="779.6" width="8.8" height="5.2" fill="#107c41"/><rect x="411.4" y="784.8" width="17.6" height="5.2" fill="#185c37"/>
  <rect x="405" y="773.9" width="12.4" height="12.4" rx="1.2" fill="#107c41"/>
  <!-- edge -->
  <defs>
    <linearGradient id="eg1" x1="0" y1="0" x2="1" y2="1"><stop offset="0" stop-color="#35c1f1"/><stop offset=".6" stop-color="#1b9de2"/><stop offset="1" stop-color="#0c59a4"/></linearGradient>
    <linearGradient id="eg2" x1="0" y1="0" x2="1" y2="0"><stop offset="0" stop-color="#2db7e8"/><stop offset="1" stop-color="#6fdc4c"/></linearGradient>
  </defs>
  <circle cx="466" cy="780" r="12" fill="url(#eg1)"/>
  <path d="M454.2 778 A12 12 0 0 1 478 780.4 C478 784 475 785.6 472 785.6 C469 785.6 468.4 784 469.4 782.6 C470.4 781 469.4 777.4 465.6 777.2 C461 777 456 780 454.2 778Z" fill="url(#eg2)"/>
  <path d="M461 780 C459.6 784.6 462.6 790.4 469.4 791.4 A12 12 0 0 1 455 783 C456.6 780 459.4 779.6 461 780Z" fill="#0c59a4"/>
  <path d="M461.6 779.6 C460.8 784 464 788.4 469.6 788.8 C472.4 789 475 787.8 476.8 786 C474 790 470 791.8 466 792 C461 790.4 458.8 784.6 461.6 779.6Z" fill="#1469b8"/>
  <path d="M466.6 777.6 a3.5 3.5 0 0 0 -0.6 6.8 C470.5 786.4 474.5 785.6 479 783 L478.6 780.6 C475 782.4 471 782.6 469.8 781.4 C470.4 779.6 468.8 777.6 466.6 777.6Z" fill="#1b1c1e"/>
  <!-- tiktok -->
  <circle cx="515.2" cy="780" r="11.8" fill="#000"/>
  <path d="M516.6 773.4 V783.6 a3 3 0 1 1 -2.6 -3 M516.6 773.6 a4.2 4.2 0 0 0 4 3.8" fill="none" stroke="#25f4ee" stroke-width="2.2" transform="translate(-.8 .5)"/>
  <path d="M516.6 773.4 V783.6 a3 3 0 1 1 -2.6 -3 M516.6 773.6 a4.2 4.2 0 0 0 4 3.8" fill="none" stroke="#fe2c55" stroke-width="2.2" transform="translate(.8 -.3)"/>
  <path d="M516.6 773.4 V783.6 a3 3 0 1 1 -2.6 -3 M516.6 773.6 a4.2 4.2 0 0 0 4 3.8" fill="none" stroke="#fff" stroke-width="2.2"/>
  <!-- vscode -->
  <path d="M569.4 768 L575.8 770.8 V789.2 L569.4 792 L568 790 V770Z" fill="#1f9cf0"/>
  <path d="M569.4 768 L553 783.4 L555.4 785.8 L569.8 775Z" fill="#0f7acc"/>
  <path d="M569.4 792 L553 776.6 L555.4 774.2 L569.8 785Z" fill="#1687d9"/>
  <path d="M569.4 768 L575.8 770.8 V789.2 L569.4 792 Z" fill="#2aa8f5"/>
  <!-- chrome 2 -->
  <g transform="translate(293.8 -.6)">
    <circle cx="319" cy="780" r="12" fill="#e94235"/>
    <path d="M308.6 774 A12 12 0 0 0 319 792 L324.4 783 L313.8 783 Z" fill="#34a853"/>
    <path d="M319 792 A12 12 0 0 0 329.4 774 L319 774 L324.6 783Z" fill="#fbbc05"/>
    <path d="M308.6 774 A12 12 0 0 1 329.4 774 L319 774.4Z" fill="#e94235"/>
    <circle cx="319" cy="780" r="5.7" fill="#fff"/>
    <circle cx="319" cy="780" r="4.5" fill="#4285f4"/>
  </g>
  <circle cx="619.6" cy="786.2" r="7" fill="#8b948a"/><path d="M613 784 a7 7 0 0 1 6 -4.8 L620 786Z" fill="#b9bfb6"/>
  <path d="M616.4 792.4 V785 a3 3 0 0 1 6 0 V792.6 A7 7 0 0 1 616.4 792.4Z" fill="#23262a"/>
  <circle cx="619.4" cy="782.4" r="2" fill="#c9a78e"/>
  <!-- zoom -->
  <defs><linearGradient id="zg" x1="0" y1="0" x2="0" y2="1"><stop offset="0" stop-color="#2a86ff"/><stop offset="1" stop-color="#0b5cff"/></linearGradient></defs>
  <rect x="650" y="768" width="24" height="24" rx="9.5" fill="url(#zg)"/>
  <!-- tray -->
  <g fill="none" stroke="#fff" stroke-width="1.3">
    <rect x="933.6" y="772.6" width="19.4" height="14.2" rx="1.2"/>
    <path d="M953 775.4 H955.4 a.9 .9 0 0 1 .9 .9 V785 a1.8 1.8 0 0 1 -1.8 1.8 H950"/>
    <path d="M936.4 775.8 H950.4 M945.6 779 H950.4 M945.6 781.6 H950.4 M945.6 784.2 H950.4"/>
    <rect x="936.8" y="778.8" width="6" height="5.4"/>
    <path d="M983.2 783 L989 777.2 L994.8 783" stroke-width="1.4"/>
    <rect x="1008.2" y="776" width="7" height="7.6" rx="1.6"/>
    <path d="M1015.4 778.8 L1018.6 777 V782.6 L1015.4 780.8"/>
    <path d="M1009 774.4 a5.6 3.4 0 0 1 8 0 M1009 785.4 a5.6 3.4 0 0 0 8 0" stroke="#cfd3d6"/>
    <path d="M1031.4 779.6 a4.9 4.9 0 0 0 9.8 0 M1036.3 784.5 V787.4 M1033.6 787.6 H1039"/>
  </g>
  <rect x="1033.2" y="771.8" width="6.2" height="11" rx="3.1" fill="#fff"/>
  <g fill="none" stroke="#c5cacd" stroke-width="1.3" stroke-linecap="round">
    <path d="M1056.4 786.4 A11.6 11.6 0 0 1 1068 775.4"/>
    <path d="M1060 786.4 A8 8 0 0 1 1068 779"/>
    <path d="M1063.4 786.4 A4.6 4.6 0 0 1 1068 782.4"/>
  </g>
  <circle cx="1066.6" cy="785.6" r="1.5" fill="#fff"/>
  <g fill="none" stroke="#fff" stroke-width="1.2">
    <rect x="1082" y="775.6" width="10" height="8.6" rx=".6"/>
    <path d="M1092.4 778 H1093.2 V782 H1092.4"/>
    <path d="M1079.4 773.6 V775.6 M1081.6 773.6 V775.6 M1078.2 775.8 H1082.8 V777.6 a2.3 2.3 0 0 1 -4.6 0Z M1080.5 780 V782.4 H1083"/>
  </g>
  <rect x="1083" y="779.6" width="4.4" height="3.6" fill="#fff"/>
  <g fill="none" stroke="#fff" stroke-width="1.2" stroke-linejoin="round">
    <path d="M1101.6 777.6 H1104 L1107.6 773.8 V786 L1104 782.4 H1101.6Z"/>
    <path d="M1109.8 777.6 a3.4 3.4 0 0 1 0 4.8"/>
    <path d="M1111.8 775.4 a6.4 6.4 0 0 1 0 9.2" stroke="#dfe2e4"/>
    <path d="M1114 773.4 a9.4 9.4 0 0 1 0 13.2" stroke="#7f8a91"/>
  </g>
  <!-- notifications -->
  <path d="M1239.2 771.8 H1255 V785 H1244.6 L1242 788 V785 H1239.2Z" fill="#fff"/>
  <path d="M1241.8 775 H1252.4 M1241.8 777.6 H1252.4 M1241.8 780.2 H1252.4" stroke="#26363f" stroke-width="1.1"/>
  <circle cx="1254.8" cy="787.2" r="8.2" fill="#333436" stroke="#9aa0a4" stroke-width="1"/>
</svg>
<div class="t" style="left:269px;top:781.1px;font-size:12.2px;color:#fff;letter-spacing:-0.1px;-webkit-text-stroke:0.3px #fff;">99+</div>
<div class="t" style="left:161.8px;top:774.3px;font-size:12.4px;color:#fff;-webkit-text-stroke:0.45px #fff;">O</div>
<div class="t" style="left:357.2px;top:774.9px;font-size:10.6px;font-weight:bold;color:#fff;">W</div>
<div class="t" style="left:407.6px;top:774.9px;font-size:10.6px;font-weight:bold;color:#fff;">X</div>
<div class="t" style="left:653.4px;top:772.3px;font-size:13.2px;color:#fff;letter-spacing:-0.5px;-webkit-text-stroke:0.3px #fff;">zm</div>
<div class="t" style="left:1127.4px;top:773.8px;font-size:12px;color:#fff;letter-spacing:-1.3px;">ENG</div>
<div class="t" style="left:1178px;top:764.8px;font-size:12px;color:#fff;letter-spacing:-0.85px;">20:35</div>
<div class="t" style="left:1164px;top:782.8px;font-size:12px;color:#fff;letter-spacing:-0.35px;">15/04/2025</div>
<div class="t" style="left:1249px;top:781.2px;font-size:12.4px;color:#fff;letter-spacing:-1.1px;">19</div>
</body>
</html>
